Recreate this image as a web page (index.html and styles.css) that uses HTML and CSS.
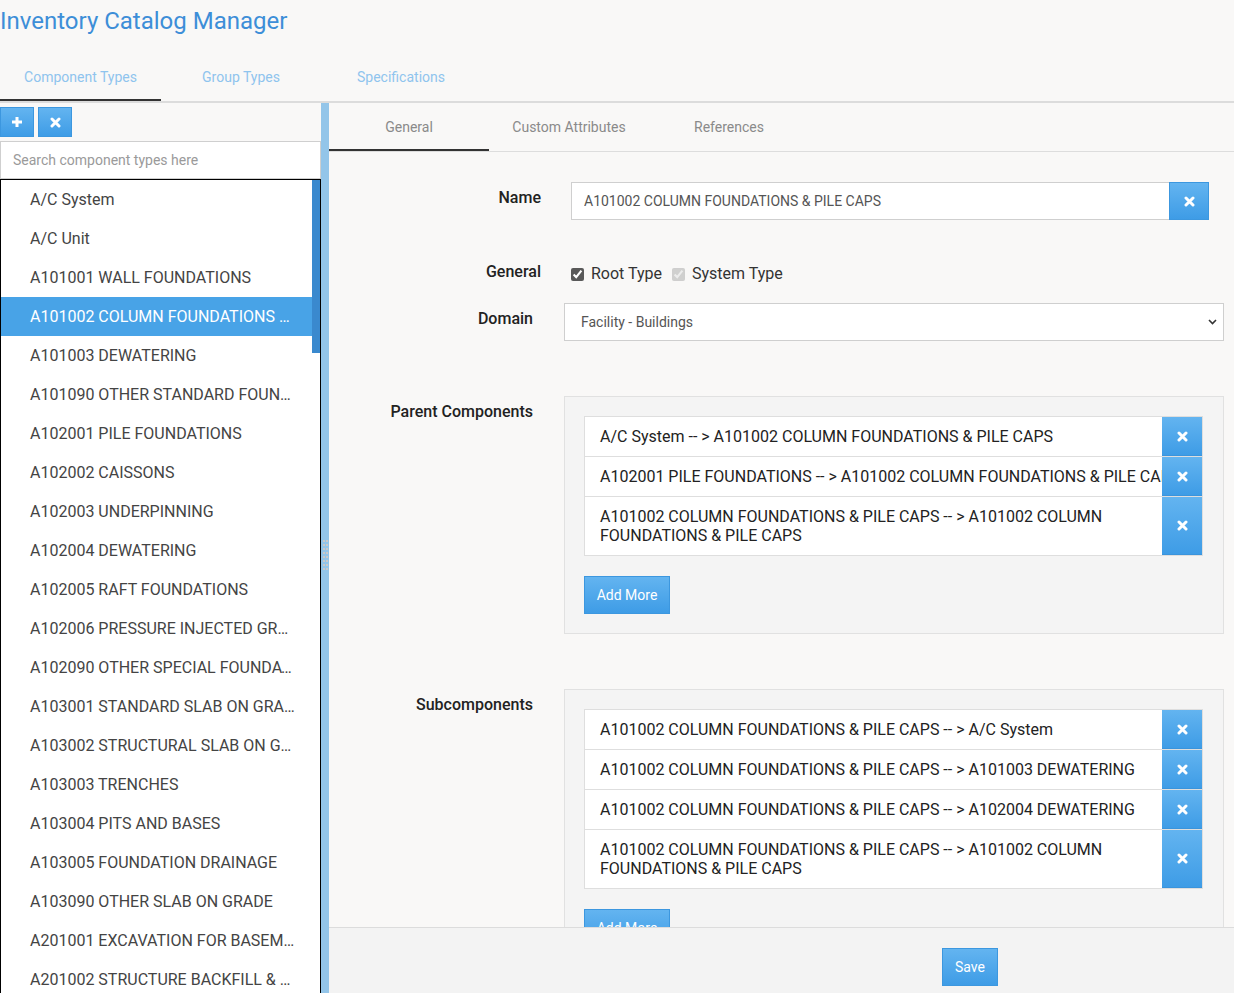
FILE: index.html
```html
<!DOCTYPE html>
<html lang="en">
<head>
<meta charset="utf-8">
<title>Inventory Catalog Manager</title>
<link rel="stylesheet" href="styles.css">
</head>
<body>
<div class="app">
  <h1 class="app-title">Inventory Catalog Manager</h1>
  <nav class="main-tabs">
    <a class="main-tab active">Component Types</a>
    <a class="main-tab">Group Types</a>
    <a class="main-tab">Specifications</a>
  </nav>
  <div class="workspace">
    <aside class="sidebar">
      <div class="toolbar">
        <button class="btn btn-icon" title="Add">
          <svg width="12" height="12" viewBox="0 0 12 12"><path d="M6 1v10M1 6h10" stroke="#fff" stroke-width="3"/></svg>
        </button>
        <button class="btn btn-icon" title="Remove">
          <svg width="11" height="11" viewBox="0 0 11 11"><path d="M2 2l7 7M9 2l-7 7" stroke="#fff" stroke-width="3" stroke-linecap="round"/></svg>
        </button>
      </div>
      <input class="search" type="text" placeholder="Search component types here">
      <div class="type-list">
        <ul class="items">
          <li>A/C System</li>
          <li>A/C Unit</li>
          <li>A101001 WALL FOUNDATIONS</li>
          <li class="selected">A101002 COLUMN FOUNDATIONS &amp; PILE CAPS</li>
          <li>A101003 DEWATERING</li>
          <li>A101090 OTHER STANDARD FOUNDATIONS</li>
          <li>A102001 PILE FOUNDATIONS</li>
          <li>A102002 CAISSONS</li>
          <li>A102003 UNDERPINNING</li>
          <li>A102004 DEWATERING</li>
          <li>A102005 RAFT FOUNDATIONS</li>
          <li>A102006 PRESSURE INJECTED GROUTING</li>
          <li>A102090 OTHER SPECIAL FOUNDATIONS</li>
          <li>A103001 STANDARD SLAB ON GRADE</li>
          <li>A103002 STRUCTURAL SLAB ON GRADE</li>
          <li>A103003 TRENCHES</li>
          <li>A103004 PITS AND BASES</li>
          <li>A103005 FOUNDATION DRAINAGE</li>
          <li>A103090 OTHER SLAB ON GRADE</li>
          <li>A201001 EXCAVATION FOR BASEMENTS</li>
          <li>A201002 STRUCTURE BACKFILL &amp; COMPACTION</li>
          <li>A201003 SHORING</li>
          <li>A202001 BASEMENT WALL CONSTRUCTION</li>
        </ul>
        <div class="scroll-thumb"></div>
      </div>
    </aside>
    <div class="splitter">
      <svg class="grip" width="6" height="30" viewBox="0 0 6 30">
        <g fill="#c9c9c9">
          <rect x="0" y="0" width="2" height="2"/><rect x="3" y="0" width="2" height="2"/>
          <rect x="0" y="4" width="2" height="2"/><rect x="3" y="4" width="2" height="2"/>
          <rect x="0" y="8" width="2" height="2"/><rect x="3" y="8" width="2" height="2"/>
          <rect x="0" y="12" width="2" height="2"/><rect x="3" y="12" width="2" height="2"/>
          <rect x="0" y="16" width="2" height="2"/><rect x="3" y="16" width="2" height="2"/>
          <rect x="0" y="20" width="2" height="2"/><rect x="3" y="20" width="2" height="2"/>
          <rect x="0" y="24" width="2" height="2"/><rect x="3" y="24" width="2" height="2"/>
          <rect x="0" y="28" width="2" height="2"/><rect x="3" y="28" width="2" height="2"/>
        </g>
      </svg>
    </div>
    <section class="detail">
      <nav class="detail-tabs">
        <a class="detail-tab active">General</a>
        <a class="detail-tab">Custom Attributes</a>
        <a class="detail-tab">References</a>
      </nav>
      <div class="detail-body">
        <div class="row row-name">
          <label class="label label-a">Name</label>
          <div class="input-group">
            <input class="text-input" type="text" value="A101002 COLUMN FOUNDATIONS &amp; PILE CAPS">
            <button class="btn btn-addon">
              <svg width="11" height="11" viewBox="0 0 11 11"><path d="M2 2l7 7M9 2l-7 7" stroke="#fff" stroke-width="3" stroke-linecap="round"/></svg>
            </button>
          </div>
        </div>
        <div class="row row-general">
          <label class="label label-a">General</label>
          <div class="checks">
            <label class="check"><input type="checkbox" checked> Root Type</label>
            <label class="check"><input type="checkbox" checked disabled> System Type</label>
          </div>
        </div>
        <div class="row row-domain">
          <label class="label label-b">Domain</label>
          <select class="select">
            <option>Facility - Buildings</option>
          </select>
        </div>
        <div class="row row-box">
          <label class="label label-b">Parent Components</label>
          <div class="box">
            <ul class="rel-list">
              <li class="rel">A/C System -- &gt; A101002 COLUMN FOUNDATIONS &amp; PILE CAPS<button class="btn rel-remove"><svg width="11" height="11" viewBox="0 0 11 11"><path d="M2 2l7 7M9 2l-7 7" stroke="#fff" stroke-width="3" stroke-linecap="round"/></svg></button></li>
              <li class="rel">A102001 PILE FOUNDATIONS -- &gt; A101002 COLUMN FOUNDATIONS &amp; PILE CAPS<button class="btn rel-remove"><svg width="11" height="11" viewBox="0 0 11 11"><path d="M2 2l7 7M9 2l-7 7" stroke="#fff" stroke-width="3" stroke-linecap="round"/></svg></button></li>
              <li class="rel">A101002 COLUMN FOUNDATIONS &amp; PILE CAPS -- &gt; A101002 COLUMN FOUNDATIONS &amp; PILE CAPS<button class="btn rel-remove"><svg width="11" height="11" viewBox="0 0 11 11"><path d="M2 2l7 7M9 2l-7 7" stroke="#fff" stroke-width="3" stroke-linecap="round"/></svg></button></li>
            </ul>
            <button class="btn btn-text">Add More</button>
          </div>
        </div>
        <div class="row row-box">
          <label class="label label-b">Subcomponents</label>
          <div class="box">
            <ul class="rel-list">
              <li class="rel">A101002 COLUMN FOUNDATIONS &amp; PILE CAPS -- &gt; A/C System<button class="btn rel-remove"><svg width="11" height="11" viewBox="0 0 11 11"><path d="M2 2l7 7M9 2l-7 7" stroke="#fff" stroke-width="3" stroke-linecap="round"/></svg></button></li>
              <li class="rel">A101002 COLUMN FOUNDATIONS &amp; PILE CAPS -- &gt; A101003 DEWATERING<button class="btn rel-remove"><svg width="11" height="11" viewBox="0 0 11 11"><path d="M2 2l7 7M9 2l-7 7" stroke="#fff" stroke-width="3" stroke-linecap="round"/></svg></button></li>
              <li class="rel">A101002 COLUMN FOUNDATIONS &amp; PILE CAPS -- &gt; A102004 DEWATERING<button class="btn rel-remove"><svg width="11" height="11" viewBox="0 0 11 11"><path d="M2 2l7 7M9 2l-7 7" stroke="#fff" stroke-width="3" stroke-linecap="round"/></svg></button></li>
              <li class="rel">A101002 COLUMN FOUNDATIONS &amp; PILE CAPS -- &gt; A101002 COLUMN FOUNDATIONS &amp; PILE CAPS<button class="btn rel-remove"><svg width="11" height="11" viewBox="0 0 11 11"><path d="M2 2l7 7M9 2l-7 7" stroke="#fff" stroke-width="3" stroke-linecap="round"/></svg></button></li>
            </ul>
            <button class="btn btn-text">Add More</button>
          </div>
        </div>
      </div>
      <footer class="detail-footer">
        <button class="btn btn-text btn-save">Save</button>
      </footer>
    </section>
  </div>
</div>
</body>
</html>
```
FILE: styles.css
```css
* { box-sizing: border-box; }

html, body {
  margin: 0;
  padding: 0;
  height: 993px;
  overflow: hidden;
}

body {
  font-family: Roboto, "Liberation Sans", sans-serif;
  background: #f9f8f7;
  color: #333;
}

.app {
  height: 993px;
  display: flex;
  flex-direction: column;
}

.app-title {
  margin: 0 0 13px 0;
  font-size: 24px;
  line-height: 42px;
  font-weight: 400;
  color: #3d8ed8;
  white-space: nowrap;
}

/* top tabs */
.main-tabs {
  display: flex;
  border-bottom: 2px solid #dcdcdc;
}
.main-tab {
  width: 160px;
  height: 46px;
  line-height: 44px;
  text-align: center;
  font-size: 14px;
  color: #8fc4ee;
  border-bottom: 2px solid transparent;
}
.main-tab.active {
  width: 161px;
  border-bottom-color: #333;
}

/* workspace */
.workspace {
  flex: 1;
  min-height: 0;
  display: flex;
}

.sidebar {
  width: 321px;
  display: flex;
  flex-direction: column;
}

.toolbar {
  display: flex;
  gap: 4px;
  padding: 4px 0;
}

.btn {
  border: 1px solid #3c97df;
  background: linear-gradient(#63b4f0, #3e9ce6);
  color: #fff;
  font-family: Roboto, "Liberation Sans", sans-serif;
  padding: 0;
  cursor: pointer;
  display: inline-flex;
  align-items: center;
  justify-content: center;
  white-space: nowrap;
}
.btn svg { display: block; }

.btn-icon {
  width: 34px;
  height: 30px;
}

.search {
  width: 321px;
  height: 38px;
  border: 1px solid #cfcfcf;
  padding: 0 12px;
  font-family: Roboto, "Liberation Sans", sans-serif;
  font-size: 14px;
  color: #555;
  background: #fff;
  outline: none;
}
.search::placeholder { color: #9a9a9a; }

.type-list {
  flex: 1;
  min-height: 0;
  position: relative;
  overflow: hidden;
  border: 1px solid #000;
  border-bottom: none;
  background: #fff;
}

.items {
  list-style: none;
  margin: 0;
  padding: 0;
  width: calc(100% - 8px);
}
.items li {
  height: 39px;
  line-height: 39px;
  padding: 0 14px 0 29px;
  font-size: 16px;
  color: #444;
  white-space: nowrap;
  overflow: hidden;
  text-overflow: ellipsis;
}
.items li.selected {
  background: #48a3e7;
  color: #fff;
}

.scroll-thumb {
  position: absolute;
  top: 0;
  right: 0;
  width: 8px;
  height: 173px;
  background: #3a89ce;
}

.splitter {
  width: 8px;
  background: #93c5e9;
  display: flex;
  align-items: center;
  justify-content: center;
  padding-top: 13px;
}
.grip { display: block; margin-left: 1px; }

/* detail */
.detail {
  flex: 1;
  min-width: 0;
  display: flex;
  flex-direction: column;
}

.detail-tabs {
  display: flex;
  border-bottom: 1px solid #dddddd;
}
.detail-tab {
  width: 160px;
  height: 48px;
  line-height: 48px;
  text-align: center;
  font-size: 14px;
  color: #8a8a8a;
  border-bottom: 2px solid transparent;
}
.detail-tab.active { border-bottom-color: #333; }

.detail-body {
  flex: 1;
  min-height: 0;
  overflow: hidden;
  padding-top: 30px;
}

.row {
  display: flex;
  align-items: flex-start;
}

.label {
  flex: none;
  text-align: right;
  font-size: 16px;
  line-height: 19px;
  font-weight: 500;
  color: #222;
  padding-top: 6px;
}
.label-a { width: 212px; margin-right: 30px; }
.label-b { width: 204px; margin-right: 31px; }

.row-name { margin-right: 25px; }

.input-group {
  flex: 1;
  display: flex;
  height: 38px;
}
.text-input {
  flex: 1;
  min-width: 0;
  height: 38px;
  border: 1px solid #cfcfcf;
  border-right: none;
  background: #fff;
  padding: 0 12px;
  font-family: Roboto, "Liberation Sans", sans-serif;
  font-size: 14px;
  color: #555;
  outline: none;
}
.btn-addon {
  width: 40px;
  height: 38px;
}

.row-general {
  margin-top: 42px;
}
.row-general .label { padding-top: 0; }
.checks {
  display: flex;
  gap: 10px;
  font-size: 16px;
  line-height: 20px;
  color: #333;
  padding-top: 2px;
}
.check {
  display: inline-flex;
  align-items: center;
  gap: 7px;
}
.check input {
  margin: 0;
  width: 13px;
  height: 13px;
  accent-color: #595959;
}

.row-domain {
  margin-top: 19px;
  margin-right: 10px;
}
.select {
  flex: 1;
  height: 38px;
  border: 1px solid #cfcfcf;
  border-radius: 0;
  background: #fff url("data:image/svg+xml,%3Csvg xmlns='http://www.w3.org/2000/svg' width='9' height='6' viewBox='0 0 9 6'%3E%3Cpath d='M1 1l3.5 3.5L8 1' fill='none' stroke='%23333' stroke-width='1.6'/%3E%3C/svg%3E") no-repeat right 6px center;
  appearance: none;
  -webkit-appearance: none;
  padding: 0 16px;
  font-family: Roboto, "Liberation Sans", sans-serif;
  font-size: 14px;
  color: #555;
  outline: none;
}

.row-box {
  margin-top: 55px;
  margin-right: 10px;
}
.box {
  flex: 1;
  background: #f4f4f4;
  border: 1px solid #e1e1e1;
  padding: 19px 20px 19px 19px;
}

.rel-list {
  list-style: none;
  margin: 0;
  padding: 0;
}
.rel {
  position: relative;
  background: #fff;
  border: 1px solid #dedede;
  padding: 10px 15px;
  font-size: 16px;
  line-height: 19px;
  color: #222;
}
.rel + .rel { margin-top: -1px; }

.rel-remove {
  position: absolute;
  top: 0;
  right: 0;
  bottom: 0;
  width: 40px;
  border: none;
  border-bottom: 1px solid #3a94dc;
}

.btn-text {
  height: 38px;
  padding: 0;
  font-size: 14px;
}
.box .btn-text {
  margin-top: 20px;
  width: 86px;
}

.detail-footer {
  flex: none;
  height: 66px;
  border-top: 1px solid #dcdcdc;
  background: #f3f3f3;
  padding: 20px 0 0 613px;
}
.btn-save {
  width: 56px;
}
```
